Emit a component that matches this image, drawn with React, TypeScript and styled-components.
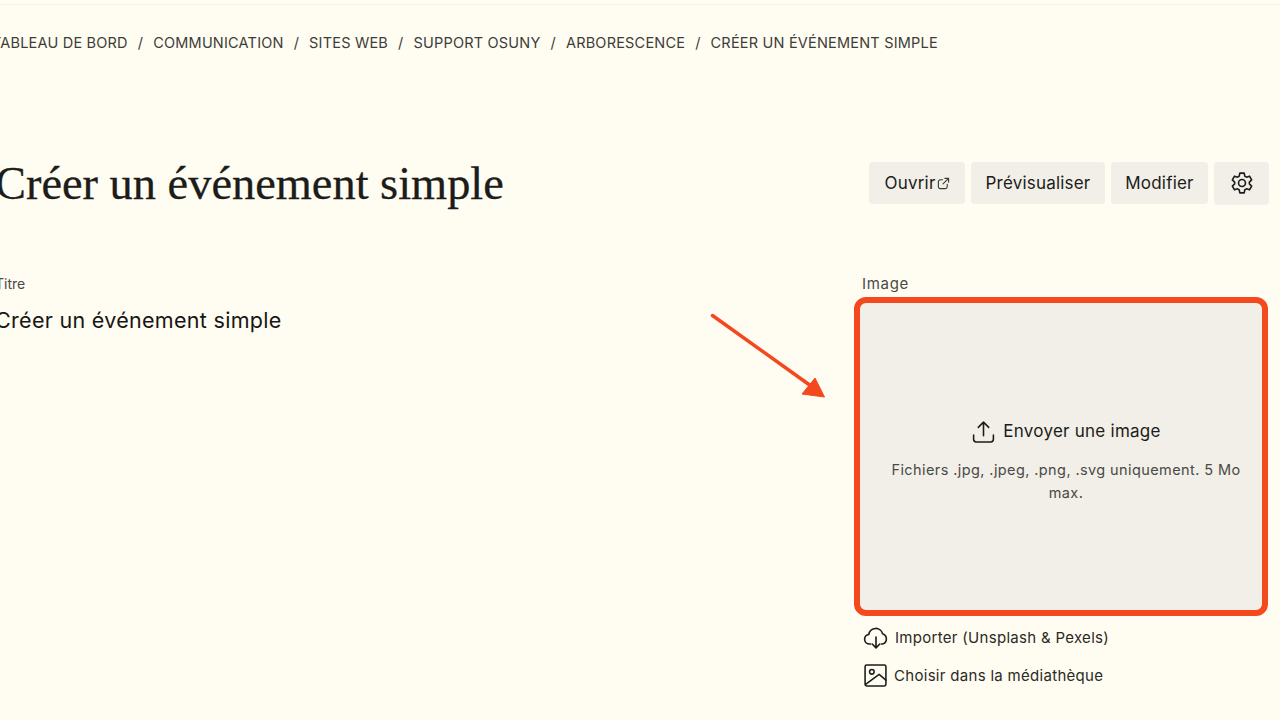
import React from "react";
import styled, { createGlobalStyle } from "styled-components";

const Global = createGlobalStyle`
  html, body { margin: 0; padding: 0; background: #fffcf1; }
  body { font-family: "Inter", "Liberation Sans", sans-serif; color: #1c1c1a; }
  * { box-sizing: border-box; }
`;

const Page = styled.div`
  position: relative;
  width: 1280px;
  height: 720px;
  overflow: hidden;
  background: #fffcf1;
`;
const TopRule = styled.div`
  margin-top: 4px;
  height: 1px;
  background: #f3f1e8;
`;
const Content = styled.main`
  margin-left: -5px;
  padding-right: 11px;
`;
const Breadcrumb = styled.nav`
  display: flex;
  align-items: center;
  height: 20px;
  margin-top: 27px;
  margin-left: -3px;
  gap: 10px;
  font-size: 14.5px;
  letter-spacing: 0.2px;
  color: #3d3d3a;
  white-space: nowrap;
`;
const Header = styled.header`
  display: flex;
  justify-content: space-between;
  align-items: center;
  margin-top: 99px;
  height: 64px;
`;
const Title = styled.h1`
  margin: 0;
  font-family: "Liberation Serif", serif;
  font-weight: 400;
  font-size: 46.4px;
  color: #1c1c1a;
  -webkit-text-stroke: 0.3px #1c1c1a;
`;
const Actions = styled.div`
  display: flex;
  align-items: center;
  gap: 6px;
`;
const ActionButton = styled.button<{ $w: number; $h?: number }>`
  display: flex;
  align-items: center;
  justify-content: center;
  gap: 1px;
  width: ${(p) => p.$w}px;
  height: ${(p) => p.$h ?? 42}px;
  padding: 0;
  border: 0;
  border-radius: 4px;
  background: #f1efe8;
  font-family: "Inter", sans-serif;
  font-size: 17px;
  letter-spacing: 0.2px;
  color: #1c1c1a;
`;
const Columns = styled.div`
  display: flex;
  justify-content: space-between;
  margin-top: 59px;
  padding-right: 1px;
`;
const Left = styled.section``;
const Right = styled.section`
  width: 414px;
`;
const Label = styled.div`
  height: 20px;
  font-size: 14px;
  line-height: 20px;
  color: #4a4a46;
`;
const ImageLabel = styled(Label)`
  padding-left: 8px;
  font-size: 15px;
  letter-spacing: 0.7px;
`;
const TitleValue = styled.div`
  margin-top: 13px;
  font-size: 21.5px;
  letter-spacing: 0.3px;
  line-height: 26px;
  color: #161614;
`;
const Drop = styled.div`
  display: flex;
  flex-direction: column;
  align-items: center;
  height: 319px;
  margin-top: 3px;
  padding: 115px 19px 0 29px;
  border: 6px solid #f4481f;
  border-radius: 12px;
  background: #f1efe8;
`;
const DropTitle = styled.div`
  display: flex;
  align-items: center;
  gap: 7px;
  font-size: 17px;
  letter-spacing: 0.25px;
  line-height: 26px;
  color: #1c1c1a;
`;
const DropHint = styled.div`
  margin-top: 14px;
  width: 360px;
  text-align: center;
  font-size: 14.5px;
  letter-spacing: 0.4px;
  line-height: 23px;
  color: #4a4a46;
`;
const Links = styled.div`
  display: flex;
  flex-direction: column;
  gap: 12px;
  margin-top: 8px;
  padding-left: 9px;
`;
const LinkRow = styled.div`
  display: flex;
  align-items: center;
  gap: 6px;
  height: 26px;
  font-size: 15px;
  letter-spacing: 0.3px;
  color: #2a2a27;
`;
const Arrow = styled.svg`
  position: absolute;
  left: 705px;
  top: 308px;
`;

const Gear = () => (
  <svg width="26" height="26" viewBox="0 0 24 24" fill="none" stroke="#1c1c1a" strokeWidth="1.5" strokeLinejoin="round">
    <path d="M10 2.9h4l.6 2.8 1.6.9 2.7-.9 2 3.5-2.1 1.9v1.8l2.1 1.9-2 3.5-2.7-.9-1.6.9-.6 2.8h-4l-.6-2.8-1.6-.9-2.7.9-2-3.5 2.1-1.9v-1.8L3.1 9.2l2-3.5 2.7.9 1.6-.9z" />
    <circle cx="12" cy="12" r="3.2" />
  </svg>
);
const External = () => (
  <svg width="13" height="13" viewBox="0 0 14 14" fill="none" stroke="#3a3a37" strokeWidth="1.2" strokeLinecap="round" strokeLinejoin="round">
    <path d="M11 8v2.5a2 2 0 0 1-2 2H3.5a2 2 0 0 1-2-2V5a2 2 0 0 1 2-2H6" />
    <path d="M8.5 1.5h4v4M12.5 1.5 6.5 7.5" />
  </svg>
);
const Upload = () => (
  <svg width="25" height="25" viewBox="0 0 24 24" fill="none" stroke="#1c1c1a" strokeWidth="1.5" strokeLinecap="round" strokeLinejoin="round">
    <path d="M2.5 15.5v4a2.5 2.5 0 0 0 2.5 2.5h14a2.5 2.5 0 0 0 2.5-2.5v-4" />
    <path d="M12 16V3M7 8l5-5 5 5" />
  </svg>
);
const CloudDown = () => (
  <svg width="26" height="26" viewBox="0 0 24 24" fill="none" stroke="#1c1c1a" strokeWidth="1.5" strokeLinecap="round" strokeLinejoin="round">
    <path d="M7 18.5H6a4.5 4.5 0 0 1-.6-8.96 6.5 6.5 0 0 1 12.7-.6A5 5 0 0 1 18 18.5h-1" />
    <path d="M12 12v10M8.5 18.5 12 22l3.5-3.5" />
  </svg>
);
const Picture = () => (
  <svg width="25" height="25" viewBox="0 0 24 24" fill="none" stroke="#1c1c1a" strokeWidth="1.5" strokeLinecap="round" strokeLinejoin="round">
    <rect x="2" y="2" width="20" height="20" rx="1.5" />
    <circle cx="8.5" cy="8.5" r="2.2" />
    <path d="M2.5 20.5 15.5 11 22 16.5" />
  </svg>
);

const crumbs = ["TABLEAU DE BORD", "COMMUNICATION", "SITES WEB", "SUPPORT OSUNY", "ARBORESCENCE", "CRÉER UN ÉVÉNEMENT SIMPLE"];

export default function App() {
  return (
    <Page>
      <Global />
      <TopRule />
      <Content>
        <Breadcrumb>
          {crumbs.map((c, i) => (
            <React.Fragment key={c}>
              {i > 0 && <span>/</span>}
              <span>{c}</span>
            </React.Fragment>
          ))}
        </Breadcrumb>
        <Header>
          <Title>Créer un événement simple</Title>
          <Actions>
            <ActionButton $w={96}>Ouvrir<External /></ActionButton>
            <ActionButton $w={134}>Prévisualiser</ActionButton>
            <ActionButton $w={97}>Modifier</ActionButton>
            <ActionButton $w={55} $h={43} aria-label="Réglages"><Gear /></ActionButton>
          </Actions>
        </Header>
        <Columns>
          <Left>
            <Label>Titre</Label>
            <TitleValue>Créer un événement simple</TitleValue>
          </Left>
          <Right>
            <ImageLabel>Image</ImageLabel>
            <Drop>
              <DropTitle><Upload />Envoyer une image</DropTitle>
              <DropHint>Fichiers .jpg, .jpeg, .png, .svg uniquement. 5 Mo max.</DropHint>
            </Drop>
            <Links>
              <LinkRow><CloudDown />Importer (Unsplash &amp; Pexels)</LinkRow>
              <LinkRow><Picture />Choisir dans la médiathèque</LinkRow>
            </Links>
          </Right>
        </Columns>
      </Content>
      <Arrow width="130" height="100" viewBox="0 0 130 100">
        <path d="M7.5 7.5 106 78" stroke="#f4481f" strokeWidth="3.5" strokeLinecap="round" fill="none" />
        <path d="M110 70 119.5 89 97 86z" fill="#f4481f" stroke="#f4481f" strokeWidth="1" strokeLinejoin="round" />
      </Arrow>
    </Page>
  );
}
